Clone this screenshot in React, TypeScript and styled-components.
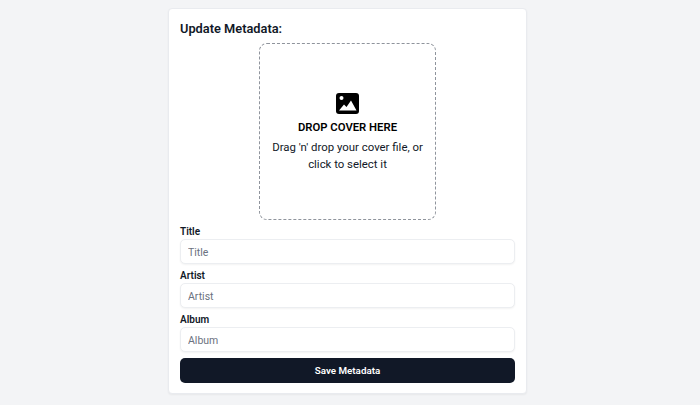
import * as React from 'react';
import styled, { createGlobalStyle } from 'styled-components';

const GlobalStyle = createGlobalStyle`
    html, body {
        margin: 0;
        padding: 0;
        height: 100%;
        background: #f3f4f6;
        font-family: Roboto, "Noto Sans", sans-serif;
        color: #111827;
    }
`;

const Page = styled.div`
    display: flex;
    justify-content: flex-start;
    align-items: flex-start;
    box-sizing: border-box;
    height: 405px;
    overflow: hidden;
    padding: 8px 0 0 168px;
`;

const Card = styled.form`
    display: flex;
    flex-direction: column;
    box-sizing: border-box;
    width: 359px;
    height: 386px;
    padding: 11px 11px 10px;
    background: #fff;
    border: 1px solid #e9ebef;
    border-radius: 4px;
    box-shadow: 0 1px 2px rgba(0, 0, 0, 0.05);
`;

const Heading = styled.h2`
    margin: 0 0 5px;
    font-size: 12.8px;
    line-height: 18px;
    font-weight: 600;
    color: #111827;
`;

const DropZone = styled.div`
    display: flex;
    flex: none;
    flex-direction: column;
    align-items: center;
    justify-content: center;
    align-self: center;
    box-sizing: border-box;
    width: 177px;
    height: 177px;
    padding: 2px 8px 0;
    border: 1px dashed #8f949c;
    border-radius: 8px;
    text-align: center;
`;

const CoverIcon = styled.svg`
    width: 23px;
    height: 21px;
    margin-bottom: 6px;
`;

const DropTitle = styled.div`
    font-size: 11.3px;
    line-height: 16px;
    font-weight: 600;
    color: #000;
    margin-bottom: 3px;
`;

const DropHint = styled.div`
    font-size: 11.4px;
    line-height: 17px;
    color: #111827;
`;

const Field = styled.label`
    display: flex;
    flex-direction: column;
    margin-top: 5px;
`;

const FieldLabel = styled.span`
    font-size: 10px;
    line-height: 14px;
    font-weight: 600;
    color: #111827;
`;

const Input = styled.input`
    box-sizing: border-box;
    width: 100%;
    height: 25px;
    padding: 2px 7px 0;
    background: #fff;
    border: 1px solid #eceef1;
    border-radius: 5px;
    box-shadow: 0 1px 2px rgba(0, 0, 0, 0.05);
    font-family: inherit;
    font-size: 10.5px;
    outline: none;

    &::placeholder {
        color: #6b7280;
    }
`;

const SaveButton = styled.button`
    height: 25px;
    margin-top: 6px;
    background: #111827;
    border: none;
    border-radius: 5px;
    color: #fff;
    font-family: inherit;
    font-size: 9.8px;
    font-weight: 600;
`;

const fields = ['Title', 'Artist', 'Album'];

export default function App(): React.ReactElement {
    return (
        <>
            <GlobalStyle />
            <Page>
                <Card>
                    <Heading>Update Metadata:</Heading>
                    <DropZone>
                        <CoverIcon viewBox="0 0 23 21">
                            <rect width="23" height="21" rx="3" fill="#000" />
                            <circle cx="5.5" cy="5" r="2" fill="#fff" />
                            <path d="M3 17.5 L8 11.5 L10.5 14 L15 7.5 L20.5 17.5 Z" fill="#fff" />
                        </CoverIcon>
                        <DropTitle>DROP COVER HERE</DropTitle>
                        <DropHint>Drag 'n' drop your cover file, or click to select it</DropHint>
                    </DropZone>
                    {fields.map((name) => (
                        <Field key={name}>
                            <FieldLabel>{name}</FieldLabel>
                            <Input placeholder={name} />
                        </Field>
                    ))}
                    <SaveButton type="button">Save Metadata</SaveButton>
                </Card>
            </Page>
        </>
    );
}
